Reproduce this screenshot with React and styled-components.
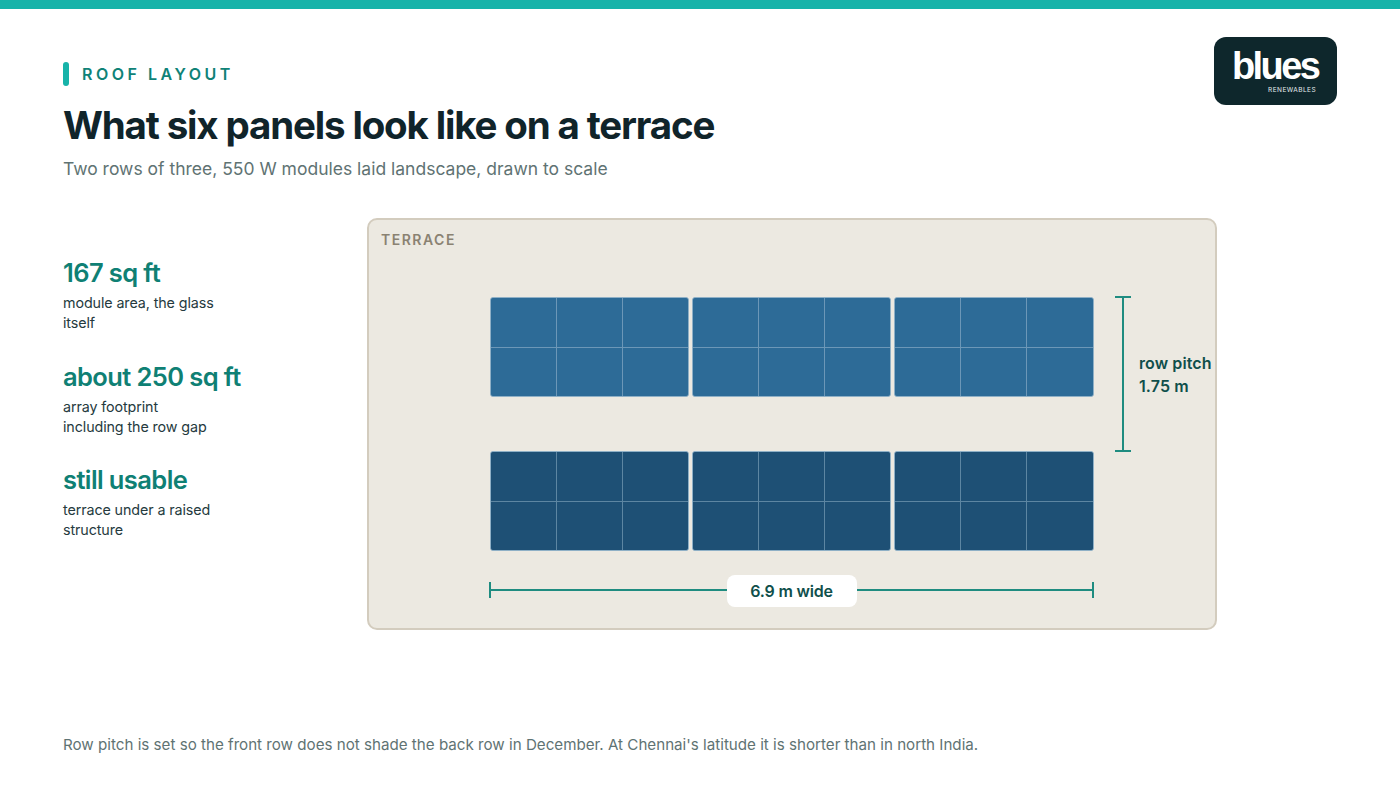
import React from "react";
import styled, { createGlobalStyle } from "styled-components";

const Global = createGlobalStyle`
  html, body { margin: 0; padding: 0; background: #fff; }
  body { font-family: Inter, "Noto Sans", "Liberation Sans", sans-serif; }
`;

const Page = styled.div`
  position: relative;
  width: 1400px;
  height: 788px;
  overflow: hidden;
  background: #fff;
  display: flex;
  flex-direction: column;
`;
const TopBar = styled.div`
  height: 9px;
  flex: none;
  background: #17b3a9;
`;
const Content = styled.div`
  flex: 1;
  display: flex;
  flex-direction: column;
  padding: 53px 0 0 63px;
`;
const Eyebrow = styled.div`
  display: flex;
  align-items: center;
  gap: 13px;
  height: 24px;
`;
const EyebrowMark = styled.span`
  width: 6px;
  height: 24px;
  border-radius: 3px;
  background: #17b3a9;
`;
const EyebrowText = styled.span`
  font-size: 16px;
  font-weight: 600;
  letter-spacing: 3.5px;
  color: #0f8277;
`;
const Title = styled.h1`
  margin: 15px 0 0;
  font-size: 38.5px;
  line-height: 48px;
  font-weight: 700;
  letter-spacing: -1.16px;
  color: #10242a;
`;
const Subtitle = styled.p`
  margin: 8px 0 0;
  font-size: 17.5px;
  line-height: 24px;
  font-weight: 400;
  color: #5f7373;
`;
const Logo = styled.div`
  position: absolute;
  left: 1214px;
  top: 37px;
  width: 123px;
  height: 68px;
  border-radius: 12px;
  background: #0e272c;
  color: #fff;
`;
const LogoWord = styled.span`
  position: absolute;
  left: 18px;
  top: 14px;
  font-family: "Liberation Sans", sans-serif;
  font-size: 38px;
  line-height: 30px;
  font-weight: 700;
  letter-spacing: -2.6px;
`;
const LogoSub = styled.span`
  position: absolute;
  right: 21px;
  top: 48.5px;
  font-size: 6.5px;
  line-height: 8px;
  letter-spacing: 0.45px;
  color: #e4ecec;
`;
const Main = styled.div`
  display: flex;
  margin-top: 37px;
`;
const Stats = styled.div`
  width: 304px;
  flex: none;
  padding-top: 39px;
  display: flex;
  flex-direction: column;
  gap: 27.5px;
`;
const Stat = styled.div`
  display: flex;
  flex-direction: column;
`;
const StatValue = styled.div`
  font-size: 25.5px;
  line-height: 32px;
  font-weight: 600;
  letter-spacing: -0.6px;
  color: #0f8074;
`;
const StatLabel = styled.div`
  margin-top: 4px;
  width: 180px;
  font-size: 14.3px;
  line-height: 20px;
  letter-spacing: -0.1px;
  color: #253a3e;
`;
const Terrace = styled.div`
  position: relative;
  box-sizing: border-box;
  width: 850px;
  height: 412px;
  border: 2px solid #d3ccbe;
  border-radius: 10px;
  background: #ece9e1;
  padding: 77px 0 0 120.5px;
`;
const TerraceLabel = styled.span`
  position: absolute;
  left: 12px;
  top: 11px;
  font-size: 14px;
  line-height: 18px;
  font-weight: 600;
  letter-spacing: 1.5px;
  color: #8a8272;
`;
const Array_ = styled.div`
  width: 604px;
  display: flex;
  flex-direction: column;
  gap: 54px;
`;
const PanelRow = styled.div`
  display: grid;
  grid-template-columns: repeat(3, 1fr);
  gap: 2.5px;
`;
const Panel = styled.div`
  box-sizing: border-box;
  height: 100px;
  display: grid;
  grid-template-columns: repeat(3, 1fr);
  grid-template-rows: repeat(2, 1fr);
  gap: 1px;
  border: 1px solid #8fb0c6;
  border-radius: 3px;
  overflow: hidden;
  background: ${p => (p.$dark ? "#5d86a2" : "#6c97b7")};
`;
const Cell = styled.div`
  background: ${p => (p.$dark ? "#1e5075" : "#2d6b97")};
`;
const WidthDim = styled.div`
  position: relative;
  margin-top: 39px;
  width: 604px;
  height: 1px;
  display: flex;
  align-items: center;
  justify-content: center;
`;
const WidthLine = styled.div`
  position: absolute;
  left: 0;
  right: 0;
  top: -1px;
  height: 2px;
  background: #1f8c80;
  &::before, &::after {
    content: "";
    position: absolute;
    top: -7px;
    width: 2px;
    height: 16px;
    background: #1f8c80;
  }
  &::before { left: -0.5px; }
  &::after { right: -0.5px; }
`;
const WidthTag = styled.div`
  position: relative;
  width: 130px;
  height: 32px;
  border-radius: 8px;
  background: #fff;
  display: flex;
  align-items: center;
  justify-content: center;
  font-size: 16px;
  font-weight: 600;
  letter-spacing: -0.2px;
  color: #0f4f4b;
`;
const PitchDim = styled.div`
  position: absolute;
  left: 753px;
  top: 76px;
  width: 2px;
  height: 156px;
  background: #1f8c80;
  &::before, &::after {
    content: "";
    position: absolute;
    left: -7px;
    width: 16px;
    height: 2px;
    background: #1f8c80;
  }
  &::before { top: 0; }
  &::after { bottom: 0; }
`;
const PitchLabel = styled.div`
  position: absolute;
  left: 770px;
  top: 132px;
  font-size: 16px;
  line-height: 23px;
  font-weight: 600;
  letter-spacing: 0.1px;
  color: #0f4f4b;
`;
const Footnote = styled.p`
  position: absolute;
  left: 63px;
  top: 734px;
  margin: 0;
  font-size: 15.17px;
  line-height: 22px;
  color: #5f7373;
`;

const stats = [
  { value: "167 sq ft", label: "module area, the glass itself" },
  { value: "about 250 sq ft", label: <>array footprint<br />including the row gap</> },
  { value: "still usable", label: "terrace under a raised structure" },
];

const SolarPanel = ({ dark }) => (
  <Panel $dark={dark}>
    {Array.from({ length: 6 }, (_, i) => <Cell key={i} $dark={dark} />)}
  </Panel>
);

const Row = ({ dark }) => (
  <PanelRow>
    {[0, 1, 2].map(i => <SolarPanel key={i} dark={dark} />)}
  </PanelRow>
);

export default function App() {
  return (
    <Page>
      <Global />
      <TopBar />
      <Logo>
        <LogoWord>blues</LogoWord>
        <LogoSub>RENEWABLES</LogoSub>
      </Logo>
      <Content>
        <Eyebrow>
          <EyebrowMark />
          <EyebrowText>ROOF LAYOUT</EyebrowText>
        </Eyebrow>
        <Title>What six panels look like on a terrace</Title>
        <Subtitle>Two rows of three, 550 W modules laid landscape, drawn to scale</Subtitle>
        <Main>
          <Stats>
            {stats.map(s => (
              <Stat key={s.value}>
                <StatValue>{s.value}</StatValue>
                <StatLabel>{s.label}</StatLabel>
              </Stat>
            ))}
          </Stats>
          <Terrace>
            <TerraceLabel>TERRACE</TerraceLabel>
            <Array_>
              <Row />
              <Row dark />
            </Array_>
            <WidthDim>
              <WidthLine />
              <WidthTag>6.9 m wide</WidthTag>
            </WidthDim>
            <PitchDim />
            <PitchLabel>row pitch<br />1.75 m</PitchLabel>
          </Terrace>
        </Main>
      </Content>
      <Footnote>Row pitch is set so the front row does not shade the back row in December. At Chennai's latitude it is shorter than in north India.</Footnote>
    </Page>
  );
}
